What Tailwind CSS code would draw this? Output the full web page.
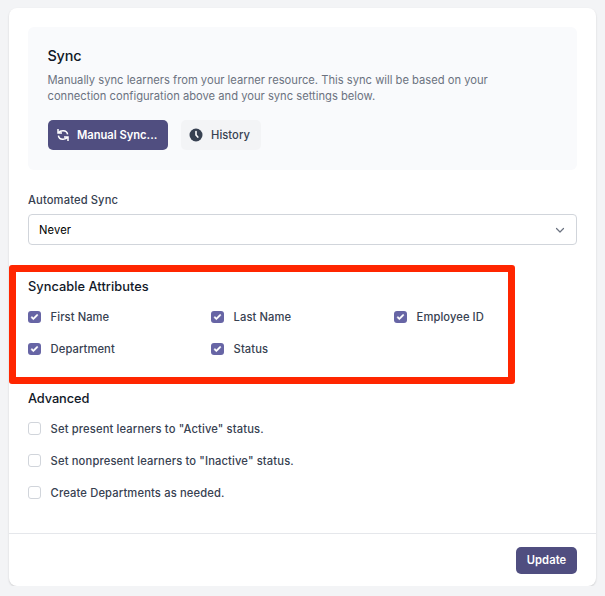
<!DOCTYPE html>
<html lang="en">
<head>
  <meta charset="UTF-8">
  <title>Sync Settings</title>
  <script src="https://cdn.jsdelivr.net/npm/@tailwindcss/browser@4"></script>
</head>
<body class="bg-[#f3f4f6] font-['Inter',sans-serif] text-[11.2px] leading-4 tracking-[0.12px] font-medium text-[#374151]">

  <svg class="hidden">
    <symbol id="check" viewBox="0 0 16 16">
      <path fill="#fff" stroke="#fff" stroke-width=".5" d="M12.207 4.793a1 1 0 010 1.414l-5 5a1 1 0 01-1.414 0l-2-2a1 1 0 011.414-1.414L6.5 9.086l4.293-4.293a1 1 0 011.414 0z"/>
    </symbol>
  </svg>

  <div class="relative ml-[9px] mt-2 flex h-[578px] w-[587px] flex-col rounded-lg bg-white shadow-[0_1px_2px_rgba(0,0,0,0.16)]">
    <div class="grow px-[19px] pt-[19px]">

      <!-- Manual sync -->
      <section class="h-[143px] rounded-md bg-[#f9fafc] px-5 pt-[19px]">
        <h2 class="-ml-[0.5px] text-[14.4px] leading-5 tracking-[-0.2px] text-[#111827]">Sync</h2>
        <p class="-ml-[0.5px] mt-[6px] font-normal tracking-[0px] text-[#6b7280]">Manually sync learners from your learner resource. This sync will be based on your<br>connection configuration above and your sync settings below.</p>
        <div class="mt-4 flex gap-[13px]">
          <button class="flex h-[30px] w-[120px] items-center rounded-[5px] bg-[#504e80] pl-[9px] font-semibold tracking-[-0.02px] text-white">
            <svg class="mr-2 size-3" viewBox="0 0 12 12" fill="none" stroke="currentColor" stroke-width="1.5">
              <path d="M1 0V4h4M1.4 3.8C3 1.200 9.800.200 10.600 5.400M11 12V8H7M10.600 8.200C9 10.800 2.200 11.800 1.400 6.600"/>
            </svg>
            Manual Sync...
          </button>
          <button class="flex h-[30px] w-20 items-center rounded-[5px] bg-[#f3f4f6] pl-2 tracking-[0.05px]">
            <svg class="mr-2 size-[14px]" viewBox="0 0 14 14">
              <circle cx="7" cy="7" r="6.500" fill="#374151"/>
              <path d="M7 3.600V7l1.800 2.100" fill="none" stroke="#fff" stroke-width="1.600" stroke-linecap="round"/>
            </svg>
            History
          </button>
        </div>
      </section>

      <!-- Automated sync -->
      <label class="mt-[22px] block">Automated Sync</label>
      <div class="mt-[6px] flex h-[31px] items-center justify-between rounded border border-[#d1d5db] bg-white pl-[10px] pr-[11px] font-normal text-black">
        Never
        <svg class="size-[10px]" viewBox="0 0 10 10" fill="none" stroke="#6b7280" stroke-width="1.200" stroke-linecap="round" stroke-linejoin="round"><path d="M1.500 3.500 5 7l3.500-3.500"/></svg>
      </div>

      <!-- Attributes -->
      <h3 class="mt-[34px] text-[12.8px] tracking-[0.04px] text-[#111827]">Syncable Attributes</h3>
      <div class="mt-[14px] grid grid-cols-3 gap-y-4 tracking-[0.08px]">
        <label class="flex items-center gap-[9.6px]"><svg class="h-3 w-[13px] rounded-[3px] bg-[#6765a5]"><use href="#check"/></svg>First Name</label>
        <label class="flex items-center gap-[9.6px]"><svg class="h-3 w-[13px] rounded-[3px] bg-[#6765a5]"><use href="#check"/></svg>Last Name</label>
        <label class="flex items-center gap-[9.6px]"><svg class="h-3 w-[13px] rounded-[3px] bg-[#6765a5]"><use href="#check"/></svg>Employee ID</label>
        <label class="flex items-center gap-[9.6px]"><svg class="h-3 w-[13px] rounded-[3px] bg-[#6765a5]"><use href="#check"/></svg>Department</label>
        <label class="flex items-center gap-[9.6px]"><svg class="h-3 w-[13px] rounded-[3px] bg-[#6765a5]"><use href="#check"/></svg>Status</label>
      </div>

      <!-- Advanced -->
      <h3 class="mt-[34px] text-[12.8px] tracking-[-0.1px] text-[#111827]">Advanced</h3>
      <div class="mt-[14px] flex flex-col gap-4 tracking-[0.14px]">
        <label class="flex items-center gap-[9.6px]"><span class="mb-px size-[13px] rounded-[3px] border border-[#d1d5db]"></span>Set present learners to "Active" status.</label>
        <label class="flex items-center gap-[9.6px]"><span class="mb-px size-[13px] rounded-[3px] border border-[#d1d5db]"></span>Set nonpresent learners to "Inactive" status.</label>
        <label class="flex items-center gap-[9.6px]"><span class="mb-px size-[13px] rounded-[3px] border border-[#d1d5db]"></span>Create Departments as needed.</label>
      </div>
    </div>

    <footer class="flex h-[53px] items-center justify-end border-t border-[#e5e7eb] pr-[19px]">
      <button class="h-[27px] w-[61px] rounded-[5px] bg-[#504e80] font-semibold tracking-[0.1px] text-white">Update</button>
    </footer>

    <!-- Highlight around the attributes -->
    <div class="pointer-events-none absolute left-0 top-[257px] h-[119px] w-[506px] rounded-[3px] border-[7px] border-[#ff2600]"></div>
  </div>

</body>
</html>
